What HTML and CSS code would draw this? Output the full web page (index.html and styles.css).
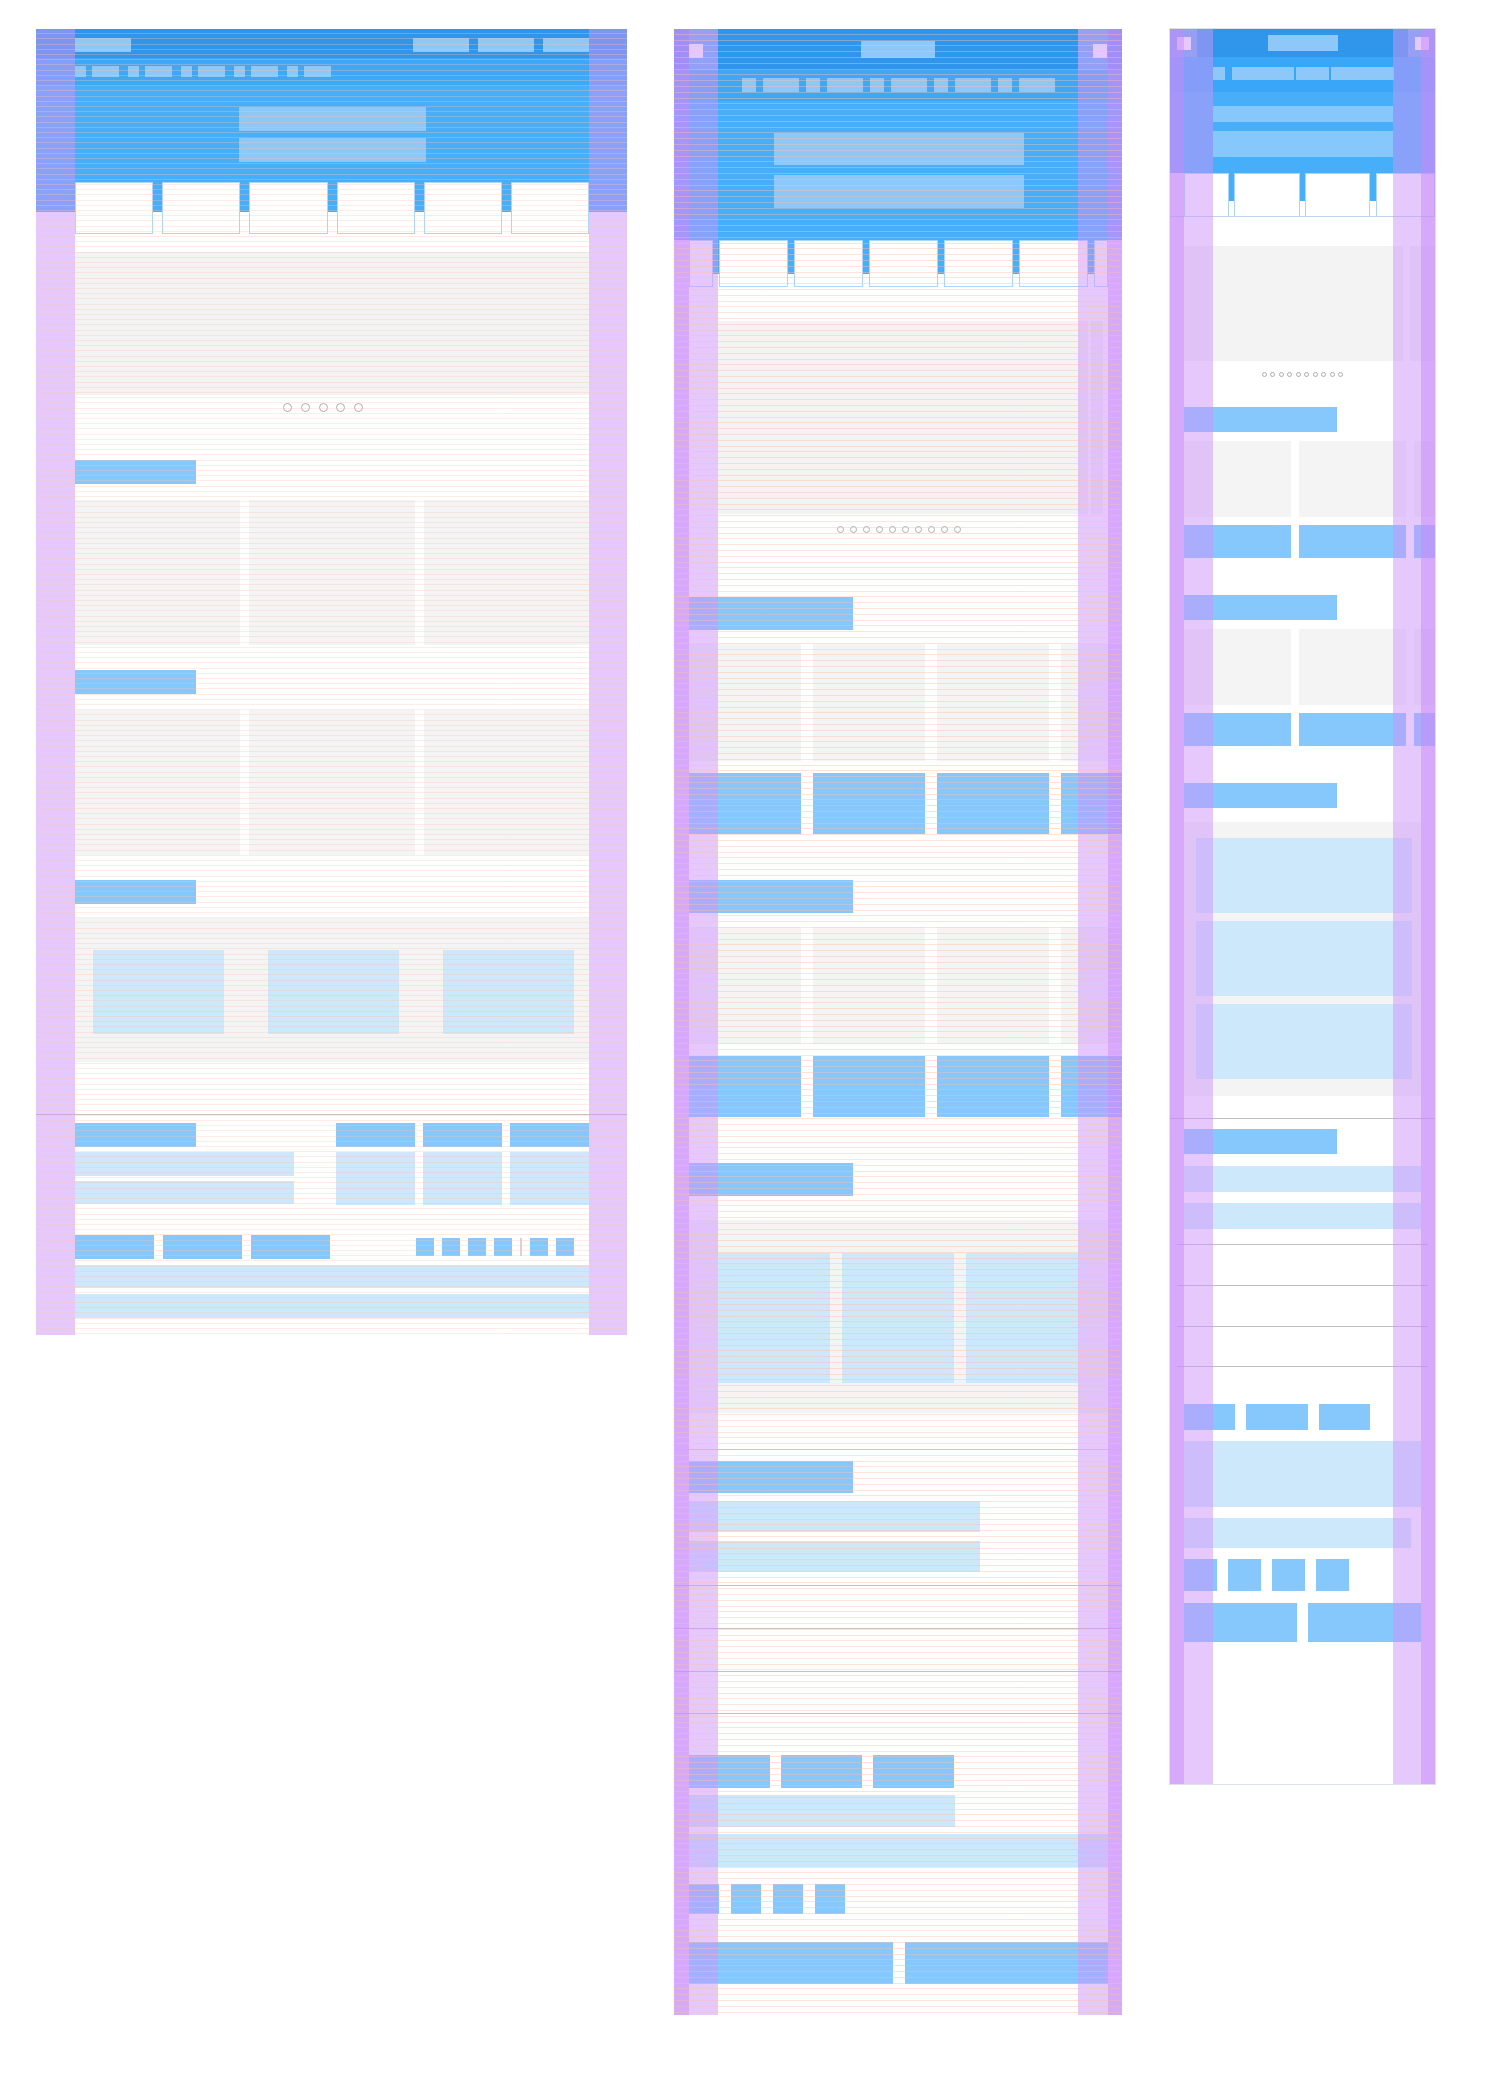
FILE: index.html
```html
<!DOCTYPE html>
<html lang="en">
<head>
    <meta charset="UTF-8">
    <meta name="viewport" content="width=device-width, initial-scale=1.0">
    <title>Responsive Wireframes</title>
    <link rel="stylesheet" href="styles.css">
</head>
<body>

<div class="sheet">

    <!-- Desktop -->
    <section class="device desktop">
        <div class="page">
            <header class="masthead">
                <div class="topbar">
                    <span class="logo"></span>
                    <div class="links"><span></span><span></span><span></span></div>
                </div>
                <nav class="navbar">
                    <span class="nav-icon"></span><span class="nav-label"></span>
                    <span class="nav-icon"></span><span class="nav-label"></span>
                    <span class="nav-icon"></span><span class="nav-label"></span>
                    <span class="nav-icon"></span><span class="nav-label"></span>
                    <span class="nav-icon"></span><span class="nav-label"></span>
                </nav>
                <div class="hero">
                    <span class="hero-line"></span>
                    <span class="hero-line"></span>
                </div>
            </header>
            <div class="tabs">
                <span class="tab"></span><span class="tab"></span><span class="tab"></span>
                <span class="tab"></span><span class="tab"></span><span class="tab"></span>
            </div>
            <div class="carousel"><div class="slide"></div></div>
            <div class="dots"><i></i><i></i><i></i><i></i><i></i></div>

            <div class="title"></div>
            <div class="cards"><div class="card"></div><div class="card"></div><div class="card"></div></div>
            <div class="title"></div>
            <div class="cards"><div class="card"></div><div class="card"></div><div class="card"></div></div>
            <div class="title"></div>
            <div class="feature">
                <div class="feature-item"></div><div class="feature-item"></div><div class="feature-item"></div>
            </div>

            <div class="rule"></div>
            <footer class="footer">
                <div class="footer-main">
                    <div class="footer-about">
                        <div class="title"></div>
                        <div class="text-line"></div>
                        <div class="text-line"></div>
                    </div>
                    <div class="footer-cols">
                        <div class="footer-col"><div class="col-head"></div><div class="col-body"></div></div>
                        <div class="footer-col"><div class="col-head"></div><div class="col-body"></div></div>
                        <div class="footer-col"><div class="col-head"></div><div class="col-body"></div></div>
                    </div>
                </div>
                <div class="footer-bar">
                    <div class="footer-links"><span></span><span></span><span></span></div>
                    <div class="social">
                        <span></span><span></span><span></span><span></span>
                        <b class="divider"></b>
                        <span></span><span></span>
                    </div>
                </div>
                <div class="legal"></div>
                <div class="legal"></div>
            </footer>
        </div>
        <div class="columns">
            <span class="gutter left"></span>
            <span class="gutter right"></span>
        </div>
        <div class="baseline"></div>
    </section>

    <!-- Tablet -->
    <section class="device tablet">
        <div class="page">
            <header class="masthead">
                <div class="topbar">
                    <span class="menu-btn"><i></i></span>
                    <span class="logo"></span>
                    <span class="menu-btn right"><i></i></span>
                </div>
                <nav class="navbar">
                    <span class="nav-icon"></span><span class="nav-label"></span>
                    <span class="nav-icon"></span><span class="nav-label"></span>
                    <span class="nav-icon"></span><span class="nav-label"></span>
                    <span class="nav-icon"></span><span class="nav-label"></span>
                    <span class="nav-icon"></span><span class="nav-label"></span>
                </nav>
                <div class="hero">
                    <span class="hero-line"></span>
                    <span class="hero-line"></span>
                </div>
            </header>
            <div class="tabs">
                <span class="tab"></span><span class="tab"></span><span class="tab"></span><span class="tab"></span>
                <span class="tab"></span><span class="tab"></span><span class="tab"></span>
            </div>
            <div class="carousel"><div class="slide"></div><div class="slide peek"></div></div>
            <div class="dots"><i></i><i></i><i></i><i></i><i></i><i></i><i></i><i></i><i></i><i></i></div>

            <div class="title"></div>
            <div class="shelf">
                <div class="item"><div class="card"></div><div class="label"></div></div>
                <div class="item"><div class="card"></div><div class="label"></div></div>
                <div class="item"><div class="card"></div><div class="label"></div></div>
                <div class="item"><div class="card"></div><div class="label"></div></div>
            </div>
            <div class="title"></div>
            <div class="shelf">
                <div class="item"><div class="card"></div><div class="label"></div></div>
                <div class="item"><div class="card"></div><div class="label"></div></div>
                <div class="item"><div class="card"></div><div class="label"></div></div>
                <div class="item"><div class="card"></div><div class="label"></div></div>
            </div>
            <div class="title"></div>
            <div class="feature">
                <div class="feature-item"></div><div class="feature-item"></div><div class="feature-item"></div>
            </div>

            <div class="rule"></div>
            <footer class="footer">
                <div class="title"></div>
                <div class="text-line"></div>
                <div class="text-line"></div>
                <div class="list"><div class="row"></div><div class="row"></div><div class="row"></div></div>
                <div class="footer-links"><span></span><span></span><span></span></div>
                <div class="text-line short"></div>
                <div class="text-line wide"></div>
                <div class="social"><span></span><span></span><span></span><span></span></div>
                <div class="actions"><span></span><span></span></div>
            </footer>
        </div>
        <div class="columns">
            <span class="margin left"></span>
            <span class="gutter left"></span>
            <span class="gutter right"></span>
            <span class="margin right"></span>
        </div>
        <div class="baseline"></div>
    </section>

    <!-- Mobile -->
    <section class="device mobile">
        <div class="page">
            <header class="masthead">
                <div class="topbar">
                    <span class="menu-btn"><i></i></span>
                    <span class="logo"></span>
                    <span class="menu-btn"><i></i></span>
                </div>
                <nav class="navbar">
                    <span class="nav-label"></span><span class="nav-label"></span>
                    <span class="nav-label"></span><span class="nav-label"></span>
                </nav>
                <div class="hero">
                    <span class="hero-line"></span>
                    <span class="hero-line"></span>
                </div>
            </header>
            <div class="tabs">
                <span class="tab"></span><span class="tab"></span><span class="tab"></span><span class="tab"></span>
            </div>
            <div class="carousel"><div class="slide"></div><div class="slide peek"></div></div>
            <div class="dots"><i></i><i></i><i></i><i></i><i></i><i></i><i></i><i></i><i></i><i></i></div>

            <div class="title"></div>
            <div class="shelf">
                <div class="item"><div class="card"></div><div class="label"></div></div>
                <div class="item"><div class="card"></div><div class="label"></div></div>
                <div class="item"><div class="card"></div><div class="label"></div></div>
            </div>
            <div class="title"></div>
            <div class="shelf">
                <div class="item"><div class="card"></div><div class="label"></div></div>
                <div class="item"><div class="card"></div><div class="label"></div></div>
                <div class="item"><div class="card"></div><div class="label"></div></div>
            </div>
            <div class="title"></div>
            <div class="feature">
                <div class="feature-item"></div><div class="feature-item"></div><div class="feature-item"></div>
            </div>

            <div class="rule"></div>
            <footer class="footer">
                <div class="title"></div>
                <div class="text-line"></div>
                <div class="text-line"></div>
                <div class="list"><div class="row"></div><div class="row"></div><div class="row"></div></div>
                <div class="footer-links"><span></span><span></span><span></span></div>
                <div class="text-block"></div>
                <div class="text-line short"></div>
                <div class="social"><span></span><span></span><span></span><span></span></div>
                <div class="actions"><span></span><span></span></div>
            </footer>
        </div>
        <div class="columns">
            <span class="margin left"></span>
            <span class="gutter left"></span>
            <span class="gutter right"></span>
            <span class="margin right"></span>
        </div>
    </section>

</div>

</body>
</html>
```

FILE: styles.css
```css
body {
    margin: 0;
    background: #fff;
    font-family: "Liberation Sans", Arial, sans-serif;
}

.sheet {
    display: flex;
    align-items: flex-start;
    gap: 47px;
    padding: 29px 0 0 36px;
}

/* ---------- shared pieces ---------- */

.device {
    position: relative;
    flex: none;
    overflow: hidden;
    background: #fff;
}

.desktop { width: 591px; height: 1306px; }
.tablet  { width: 448px; height: 1986px; margin-right: 1px; }
.mobile  { width: 265px; height: 1755px; box-shadow: 0 0 0 1px #dde2ea; }

.logo,
.links span,
.nav-icon,
.nav-label,
.hero-line {
    display: block;
    background: #8dc8f8;
}

.masthead {
    box-sizing: border-box;
}

.topbar,
.navbar {
    display: flex;
    box-sizing: border-box;
}

.hero {
    display: flex;
    flex-direction: column;
    align-items: center;
}

.tabs {
    display: flex;
    position: relative;
}

.tab {
    display: block;
    background: #fff;
    border: 1px solid #abd6f8;
    box-sizing: border-box;
}

.menu-btn {
    display: flex;
    box-sizing: border-box;
    background: rgba(255, 255, 255, 0.22);
}

.menu-btn i {
    display: block;
    background: #fff;
}

.carousel {
    display: flex;
}

.slide {
    flex: 1;
    background: #f3f3f3;
}

.dots {
    display: flex;
    justify-content: center;
    align-items: center;
}

.dots i {
    display: block;
    box-sizing: border-box;
    border: 1px solid #b3abab;
    border-radius: 50%;
}

.title,
.label,
.col-head,
.footer-links span,
.social span,
.actions span {
    display: block;
    background: #86c7fc;
}

.card {
    background: #f4f4f4;
}

.feature {
    display: flex;
    box-sizing: border-box;
    background: #f4f4f4;
}

.feature-item,
.text-line,
.text-block,
.col-body,
.legal {
    background: #cde7fb;
}

.rule {
    height: 1px;
    background: #cdbfbd;
}

.shelf {
    display: flex;
    overflow: hidden;
}

.item {
    flex: none;
    display: flex;
    flex-direction: column;
}

.footer-links,
.social,
.actions {
    display: flex;
}

.actions span {
    flex: 1;
}

.row {
    box-sizing: border-box;
    border-top: 1px solid #cbbfbd;
}

.row:last-child {
    border-bottom: 1px solid #cbbfbd;
}

/* grid overlay: columns and baseline lie over the page */
.columns,
.baseline {
    position: absolute;
    top: 0;
    right: 0;
    bottom: 0;
    left: 0;
    pointer-events: none;
}

.gutter,
.margin {
    position: absolute;
    top: 0;
    bottom: 0;
}

.gutter { background: rgba(205, 148, 249, 0.5); }
.margin { background: rgba(200, 140, 250, 0.75); }

/* ---------- desktop ---------- */

.desktop .page { padding: 0 38px 0 39px; }

.desktop .masthead {
    height: 183px;
    margin: 0 -38px 0 -39px;
    padding: 0 38px 0 39px;
    background: linear-gradient(#2f96eb 0 29px, #3ea8f7 29px 57px, #47aff9 57px);
}

.desktop .topbar {
    height: 29px;
    padding-top: 9px;
    justify-content: space-between;
    align-items: flex-start;
}

.desktop .logo { width: 56px; height: 14px; }
.desktop .links { display: flex; gap: 9px; }
.desktop .links span { width: 56px; height: 14px; }
.desktop .links span:last-child { width: 46px; }

.desktop .navbar {
    height: 28px;
    padding-top: 8px;
    align-items: flex-start;
}

.desktop .nav-icon { width: 11px; height: 11px; margin-right: 6px; }
.desktop .nav-label { width: 27px; height: 11px; margin-right: 9px; }

.desktop .hero { padding-top: 21px; gap: 7px; }
.desktop .hero-line { width: 187px; height: 24px; }

.desktop .tabs {
    margin-top: -30px;
    height: 52px;
    gap: 9px;
    background: linear-gradient(#47aff9 0 30px, transparent 30px);
}

.desktop .tab { flex: 1; }

.desktop .carousel { margin-top: 18px; height: 143px; }

.desktop .dots {
    margin-top: 8px;
    height: 9px;
    gap: 8.7px;
    padding-right: 18px;
}

.desktop .dots i { width: 9px; height: 9px; }

.desktop .title { width: 121px; height: 24px; margin-top: 25px; }
.desktop .dots + .title { margin-top: 48px; }

.desktop .cards {
    margin-top: 16px;
    display: grid;
    grid-template-columns: repeat(3, 1fr);
    gap: 9px;
}

.desktop .card { height: 145px; }

.desktop .feature {
    margin-top: 14px;
    height: 144px;
    padding: 32px 15px 0 18px;
    justify-content: space-between;
    align-items: flex-start;
}

.desktop .feature-item { width: 131px; height: 84px; }

.desktop .rule { margin: 52px -38px 0 -39px; }

.desktop .footer { margin-top: 8px; }

.desktop .footer-main {
    display: flex;
    justify-content: space-between;
}

.desktop .footer-about {
    width: 219px;
    display: flex;
    flex-direction: column;
    gap: 5px;
}

.desktop .footer-about .title { margin-top: 0; }
.desktop .footer-about .text-line { height: 24px; }
.desktop .footer-about .text-line:last-child { height: 23px; }

.desktop .footer-cols { display: flex; gap: 8px; }

.desktop .footer-col {
    width: 79px;
    display: flex;
    flex-direction: column;
    gap: 5px;
}

.desktop .col-head { height: 24px; }
.desktop .col-body { height: 53px; }

.desktop .footer-bar {
    margin-top: 30px;
    height: 24px;
    padding-right: 15px;
    display: flex;
    justify-content: space-between;
    align-items: center;
}

.desktop .footer-links { gap: 9px; }
.desktop .footer-links span { width: 79px; height: 24px; }

.desktop .social { gap: 8px; align-items: center; }
.desktop .social span { width: 18px; height: 18px; }

.desktop .divider {
    display: block;
    width: 2px;
    height: 18px;
    background: #d8d2d2;
}

.desktop .legal { height: 23px; margin-top: 6px; }
.desktop .legal:last-child { height: 24px; }

.desktop .gutter.left { left: 0; width: 39px; }
.desktop .gutter.right { right: 0; width: 38px; }

.desktop .baseline {
    background: repeating-linear-gradient(to bottom,
        transparent 0 4.2px,
        rgba(250, 195, 175, 0.32) 4.2px 5.2px);
}

/* ---------- tablet ---------- */

.tablet .page { padding: 0 14px 0 15px; }

.tablet .masthead {
    height: 211px;
    margin: 0 -14px 0 -15px;
    padding: 0 14px 0 15px;
    background: linear-gradient(#2f96eb 0 41px, #3ea8f7 41px 72px, #47aff9 72px);
}

.tablet .topbar {
    height: 41px;
    justify-content: space-between;
    align-items: stretch;
}

.tablet .menu-btn { width: 29px; padding-top: 15px; align-items: flex-start; }
.tablet .menu-btn.right { width: 30px; justify-content: flex-end; padding-right: 1px; }
.tablet .menu-btn i { width: 14px; height: 14px; }

.tablet .logo { width: 74px; height: 17px; margin-top: 12px; }

.tablet .navbar {
    height: 31px;
    padding-top: 8px;
    justify-content: center;
    align-items: flex-start;
    gap: 7px;
}

.tablet .nav-icon { width: 14px; height: 14px; }
.tablet .nav-label { width: 36px; height: 14px; }

.tablet .hero { padding-top: 32px; gap: 10px; }
.tablet .hero-line { width: 250px; height: 32px; }
.tablet .hero-line:last-child { height: 33px; }

.tablet .tabs {
    height: 47px;
    gap: 6px;
    background: linear-gradient(#47aff9 0 34px, transparent 34px);
}

.tablet .tab { flex: 0 0 69px; }
.tablet .tab:first-child { flex-basis: 24px; }
.tablet .tab:last-child { flex: 1; }

.tablet .carousel {
    margin: 34px -14px 0 0;
    height: 193px;
    padding-left: 29px;
    gap: 3px;
}

.tablet .slide { flex: 0 0 370px; }
.tablet .slide.peek { flex-basis: 12px; }

.tablet .dots { margin-top: 12px; height: 7px; gap: 6px; }
.tablet .dots i { width: 7px; height: 7px; }

.tablet .title { width: 164px; height: 33px; margin-top: 46px; }
.tablet .dots + .title { margin-top: 64px; }

.tablet .shelf { margin: 14px -14px 0 0; gap: 12px; }
.tablet .item { width: 112px; gap: 12px; }
.tablet .card { height: 117px; }
.tablet .label { height: 61px; }

.tablet .feature {
    margin-top: 24px;
    height: 193px;
    padding: 33px 0 0 29px;
    gap: 12px;
    align-items: flex-start;
}

.tablet .feature-item { width: 112px; height: 130px; }

.tablet .rule { margin: 36px -14px 0 -15px; }

.tablet .footer .title { margin-top: 11px; height: 32px; }

.tablet .text-line { width: 291px; height: 31px; margin-top: 8px; }
.tablet .text-line + .text-line { margin-top: 9px; }
.tablet .text-line.short { width: 266px; height: 32px; margin-top: 7px; }
.tablet .text-line.wide { width: auto; height: 33px; margin-top: 7px; }

.tablet .list { margin: 13px -14px 0 -15px; }
.tablet .row { height: 43px; }

.tablet .footer-links { margin-top: 41px; gap: 11px; }
.tablet .footer-links span { width: 81px; height: 33px; }

.tablet .social { margin-top: 17px; gap: 12px; }
.tablet .social span { width: 30px; height: 30px; }

.tablet .actions { margin-top: 28px; gap: 12px; }
.tablet .actions span { height: 42px; }

.tablet .margin.left { left: 0; width: 15px; }
.tablet .gutter.left { left: 15px; width: 29px; }
.tablet .gutter.right { right: 14px; width: 30px; }
.tablet .margin.right { right: 0; width: 14px; }

.tablet .baseline {
    background: repeating-linear-gradient(to bottom,
        transparent 0 4.8px,
        rgba(250, 190, 170, 0.42) 4.8px 5.8px);
}

/* ---------- mobile ---------- */

.mobile .page { padding: 0 14px; }

.mobile .masthead {
    height: 144px;
    margin: 0 -14px;
    padding: 0 14px;
    background: linear-gradient(#2f96eb 0 28px, #3aa6f8 28px 63px, #47aff9 63px);
}

.mobile .topbar {
    height: 28px;
    margin: 0 -14px;
    justify-content: space-between;
    align-items: stretch;
}

.mobile .menu-btn { width: 27px; padding-top: 8px; justify-content: center; align-items: flex-start; }
.mobile .menu-btn i { width: 14px; height: 13px; }

.mobile .logo { width: 70px; height: 16px; margin-top: 6px; }

.mobile .navbar {
    height: 35px;
    padding: 10px 0 0 29px;
    align-items: flex-start;
    gap: 2px;
}

.mobile .nav-label { height: 13px; }
.mobile .nav-label:nth-child(1) { width: 12px; margin-right: 5px; }
.mobile .nav-label:nth-child(2) { width: 62px; }
.mobile .nav-label:nth-child(3) { width: 33px; }
.mobile .nav-label:nth-child(4) { width: 63px; }

.mobile .hero {
    padding: 14px 28px 0 29px;
    gap: 9px;
    align-items: stretch;
}

.mobile .hero-line { height: 16px; background: #86c8fc; }
.mobile .hero-line:last-child { height: 26px; }

.mobile .tabs {
    height: 44px;
    margin: 0 -14px;
    padding-left: 14px;
    gap: 5px;
    border-bottom: 1px solid #b9d6ef;
    background: linear-gradient(#47aff9 0 28px, transparent 28px) content-box;
    box-sizing: border-box;
    overflow: hidden;
}

.mobile .tab { flex: 0 0 66px; border-bottom: 0; }
.mobile .tab:first-child { flex-basis: 45px; }
.mobile .tab:nth-child(3) { flex-basis: 65px; }
.mobile .tab:last-child { flex: 1; margin-left: 1px; }

.mobile .carousel {
    margin: 29px -14px 0 0;
    height: 115px;
    gap: 7px;
}

.mobile .slide { flex: 0 0 219px; }
.mobile .slide.peek { flex: 1; }

.mobile .dots { margin-top: 11px; height: 5px; gap: 3.5px; }
.mobile .dots i { width: 5px; height: 5px; }

.mobile .title { width: 153px; height: 25px; margin-top: 37px; }
.mobile .dots + .title { margin-top: 30px; }

.mobile .shelf { margin: 9px -14px 0 0; gap: 8px; }
.mobile .item { width: 107px; gap: 8px; }
.mobile .card { height: 76px; }
.mobile .label { height: 33px; }

.mobile .feature {
    margin-top: 14px;
    height: 274px;
    padding: 16px 9px 0 12px;
    flex-direction: column;
    gap: 8px;
}

.mobile .feature-item { height: 75px; }

.mobile .rule { margin: 22px -14px 0; background: #c3bdc6; }

.mobile .footer .title { margin-top: 10px; }

.mobile .text-line { height: 26px; margin-top: 12px; }
.mobile .text-line + .text-line { margin-top: 11px; }
.mobile .text-line.short { width: 227px; height: 30px; margin-top: 11px; }

.mobile .list { margin: 15px -7px 0; }
.mobile .row { height: 41px; border-color: #c3bdc6; }

.mobile .footer-links { margin-top: 37px; gap: 11px; }
.mobile .footer-links span { width: 51px; height: 26px; }
.mobile .footer-links span:nth-child(2) { width: 62px; }

.mobile .text-block { height: 66px; margin-top: 11px; }

.mobile .social { margin-top: 11px; gap: 11px; }
.mobile .social span { width: 33px; height: 32px; }

.mobile .actions { margin-top: 12px; gap: 11px; }
.mobile .actions span { height: 39px; }

.mobile .margin.left { left: 0; width: 14px; }
.mobile .gutter.left { left: 14px; width: 29px; }
.mobile .gutter.right { right: 14px; width: 28px; }
.mobile .margin.right { right: 0; width: 14px; }
```
